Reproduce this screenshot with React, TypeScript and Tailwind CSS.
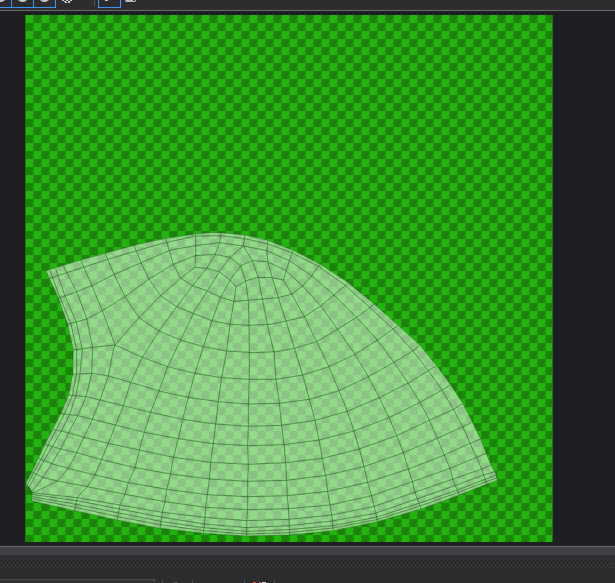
import React from "react";

/* UV shell geometry, stored in thirds of a texture pixel. */
const outline =
  "138,812 190,796 242,780 315,760 402,736 497,715 587,702 626,698 664,698 736,705 803,721 878,750 960,792 1042,846 1122,911 1194,976 1260,1036 1310,1097 1352,1154 1389,1211 1417,1266 1442,1317 1462,1368 1473,1395 1484,1415 1489,1425 1492,1441 1460,1453 1378,1485 1263,1527 1133,1565 1000,1592 869,1605 740,1608 610,1600 480,1585 351,1560 224,1532 96,1503 96,1478 78,1450 95,1417 115,1375 135,1332 158,1288 183,1240 206,1185 218,1123 220,1050 203,973 175,895";

const strips = [
  // columns that follow the left border
  "150,812 181,895 213,972 230,1050 230,1120 217,1187 194,1240 168,1290 145,1335 122,1380 100,1420 82,1455 96,1480",
  "167,806 195,888 228,965 247,1048 247,1050 240,1122 228,1187 208,1245 183,1295 158,1338 130,1385 108,1425 88,1460 96,1480",
  "190,797 232,880 260,955 278,1045 278,1050 275,1122 258,1190 233,1247 205,1300 182,1347 155,1392 128,1433 96,1475",
  "242,780 275,855 307,932 345,1035 340,1050 325,1128 300,1200 277,1258 252,1312 230,1358 205,1405 172,1443 97,1480",
  "315,760 343,825 375,890 417,953 477,993 542,1020 610,1040 680,1053 760,1058 830,1055 883,1045 950,1025 1012,988 1070,952 1122,913",
  "402,736 423,788 447,837 482,887 530,920 635,962 690,973 748,976 810,973 858,963 913,950 962,918 1002,885 1040,853",
  "497,715 520,793 542,835 578,857 622,873 662,892 702,904 745,901 787,897 835,893 875,882 908,858 935,827 960,793",
  "587,705 587,765 585,802",
  "345,1035 417,953 482,887 542,835 585,802 620,805 658,815 690,840 708,860 737,843 772,832 817,833 850,840 868,782 878,753",
  // radial columns
  "664,698 658,730 645,765 620,805 578,857 530,920 477,993 427,1072 392,1147 370,1217 347,1275 325,1330 305,1378 285,1425 262,1460 232,1493 224,1532",
  "734,705 730,738 690,772 658,815 622,873 585,930 542,1020 503,1100 477,1173 452,1237 433,1297 418,1350 405,1403 385,1448 375,1483 360,1515 351,1560",
  "722,797 692,838 662,892 637,960 610,1040 585,1120 565,1192 548,1258 535,1316 520,1372 512,1422 500,1468 495,1505 487,1537 480,1585",
  "708,860 702,904 690,973 680,1053 665,1133 655,1205 647,1272 640,1331 632,1387 628,1437 622,1484 617,1522 615,1552 610,1600",
  "203,973 260,957 307,932 375,890 447,837 520,793 585,767 643,763 690,772 722,797 737,845 745,900 747,975 748,1058 748,1138 745,1212 745,1279 743,1337 745,1393 743,1444 743,1490 743,1529 740,1562 740,1608",
  "730,738 757,782 775,832 787,897 802,973 822,1058 828,1138 838,1210 845,1276 852,1334 857,1388 860,1441 862,1487 865,1526 867,1558 869,1605",
  "803,722 801,752 803,785 817,833 835,893 858,963 883,1045 908,1125 928,1198 945,1261 957,1320 967,1375 977,1426 983,1474 990,1515 995,1545 1000,1592",
  "850,840 875,882 913,950 950,1025 987,1100 1017,1172 1042,1234 1062,1293 1078,1347 1092,1400 1103,1447 1115,1490 1123,1520 1133,1565",
  "722,797 757,782 803,785 855,810 908,858 962,917 1012,987 1065,1063 1105,1130 1138,1193 1167,1253 1190,1307 1210,1358 1225,1407 1237,1445 1245,1477 1263,1527",
  "175,895 230,875 275,857 343,823 423,788 512,750 587,737 658,728 730,738 801,752 868,782 935,827 1002,885 1070,952 1132,1020 1182,1087 1225,1150 1260,1207 1288,1260 1312,1315 1333,1365 1350,1405 1358,1438 1378,1485",
  "147,836 203,817 250,802 323,778 408,753 480,732 585,708 662,707 735,716 803,732 875,758 957,800 1030,852 1105,918 1182,990 1238,1052 1285,1112 1325,1168 1360,1228 1388,1280 1410,1330 1430,1372 1445,1408 1460,1452",
  // rows, top to bottom
  "222,1050 278,1042 345,1035 427,1072 503,1100 585,1120 665,1133 748,1138 828,1138 908,1125 987,1100 1065,1063 1132,1020 1192,978",
  "218,1123 275,1120 325,1128 392,1147 477,1173 565,1192 655,1205 745,1212 838,1210 928,1198 1017,1172 1105,1130 1182,1087 1238,1053 1258,1038",
  "206,1185 258,1190 300,1200 370,1217 452,1237 548,1258 647,1272 745,1279 845,1276 945,1261 1042,1234 1138,1193 1225,1149 1285,1112 1308,1098",
  "183,1240 233,1247 277,1258 347,1275 433,1297 535,1316 640,1331 743,1337 852,1334 957,1320 1062,1293 1167,1253 1260,1207 1325,1171 1350,1155",
  "158,1288 205,1298 252,1312 325,1330 418,1350 520,1372 632,1387 745,1393 857,1388 967,1375 1078,1347 1190,1307 1288,1261 1360,1228 1387,1212",
  "135,1332 182,1347 230,1358 305,1379 405,1403 512,1422 628,1437 743,1444 860,1441 977,1426 1092,1400 1210,1358 1312,1315 1388,1280 1415,1267",
  "115,1375 158,1392 205,1405 285,1425 385,1448 500,1468 622,1484 743,1490 862,1487 983,1474 1103,1447 1225,1407 1333,1365 1410,1330 1440,1318",
  "97,1417 128,1432 172,1443 262,1460 375,1483 495,1505 617,1522 743,1529 865,1526 990,1515 1115,1487 1237,1445 1350,1405 1430,1372 1462,1358",
  "96,1478 232,1493 360,1515 487,1537 615,1552 740,1562 867,1558 995,1545 1120,1520 1243,1477 1357,1438 1445,1407 1473,1395",
  "96,1483 230,1502 358,1527 483,1551 613,1572 740,1583 867,1577 997,1563 1125,1540 1250,1497 1365,1457 1450,1425 1484,1415",
  "96,1490 228,1513 356,1539 482,1564 612,1583 740,1594 868,1589 998,1577 1128,1552 1257,1510 1372,1470 1455,1438 1489,1425",
  "96,1496 226,1522 354,1550 480,1574 611,1592 740,1602 868,1598 999,1584 1130,1559 1260,1518 1375,1477 1458,1445 1491,1434",
];

function UvMesh() {
  return (
    <svg viewBox="75 45 1584 1581" className="block size-full" role="img" aria-label="UV layout">
      <defs>
        <pattern id="checker" x="78" y="45" width="48" height="48" patternUnits="userSpaceOnUse">
          <rect width="48" height="48" fill="#1b830b" />
          <path d="M0 0h24v24H0zM24 24h24v24H24z" fill="#22b50e" />
          <path d="M21 0h3v48h-3zM45 0h3v48h-3z" fill="#1e970c" />
        </pattern>
      </defs>
      <rect x="75" y="45" width="1584" height="1581" fill="url(#checker)" shapeRendering="crispEdges" />
      <path d="M75 45h3v1581h-3zM1656 45h3v1581h-3z" fill="#1b750d" />
      <polygon points={outline} fill="#fff" fillOpacity="0.5" />
      <g fill="none" stroke="#0c4a08" strokeWidth="3" strokeOpacity="0.5">
        {strips.map((points) => (
          <polyline key={points} points={points} />
        ))}
      </g>
      <polygon points={outline} fill="none" stroke="#1a5a16" strokeWidth="2" strokeOpacity="0.6" />
    </svg>
  );
}

function Toggle({ label, children }: { label: string; children: React.ReactNode }) {
  return (
    <button
      aria-label={label}
      className="-ml-px flex h-[22px] w-[23px] shrink-0 items-end justify-center border border-solid border-[#3399ff] pb-[5px]"
    >
      {children}
    </button>
  );
}

function Toolbar() {
  return (
    <header className="flex h-[11px] items-end overflow-hidden border-b border-[#6a6a6a] bg-[#2d2d2f] pb-[2px]">
      <div className="-ml-[10px] flex shrink-0">
        {["Shaded", "Textured", "Distortion"].map((name) => (
          <Toggle key={name} label={name}>
            <svg width="11" height="8" aria-hidden="true">
              <ellipse cx="5.5" cy="4" rx="5" ry="4" fill="#c5c5c5" />
            </svg>
          </Toggle>
        ))}
      </div>
      <button aria-label="Checker map" className="ml-[6px] flex h-[22px] w-[11px] shrink-0 items-end pb-[5px]">
        <svg width="11" height="6" shapeRendering="crispEdges" aria-hidden="true">
          <path d="M0 3h2v1H0zM4 3h2v1H4zM8 3h2v1H8zM2 4h2v1H2zM6 4h2v1H6zM3 5h2v1H3zM6 5h2v1H6z" fill="#d8d8d8" />
        </svg>
      </button>
      <div className="mb-[2px] ml-[21px] h-5 w-px shrink-0 bg-[#555557]" />
      <div className="ml-1 flex shrink-0">
        <Toggle label="Pixel snap">
          <svg width="9" height="8" shapeRendering="crispEdges" aria-hidden="true">
            <path d="M0 6h3v1H0z" fill="#c5c5c5" />
          </svg>
        </Toggle>
      </div>
      <button aria-label="Bake texture" className="ml-1 flex h-[22px] w-3 shrink-0 items-end pb-[6px]">
        <svg width="12" height="6" aria-hidden="true">
          <path d="M0 4h7l1-2h3v3l-1 1H1z" fill="#b8b8b8" />
          <path d="M8 4h2v1H8z" fill="#333" />
        </svg>
      </button>
    </header>
  );
}

function LowerPanel() {
  return (
    <footer className="bg-[#2d2d2f]">
      <div className="h-[9px] border-t border-[#6a6a6a] bg-[#414146]" />
      <svg className="mt-2 block h-[5px] w-full" shapeRendering="crispEdges" aria-hidden="true">
        <defs>
          <pattern id="grip" width="4" height="4" patternUnits="userSpaceOnUse">
            <path d="M1 0h1v1H1zM3 2h1v1H3z" fill="#505052" />
          </pattern>
        </defs>
        <rect width="100%" height="5" fill="url(#grip)" />
      </svg>
      <div className="mt-[11px] flex h-1 items-end overflow-hidden">
        <div className="h-1 w-[155px] border-t border-r border-[#4b4b4d] bg-[#353233]" />
        <div className="ml-[7px] h-[3px] w-px bg-[#555557]" />
        <div className="ml-[10px] h-px w-[5px] bg-[#5a5a5c]" />
        <div className="ml-[14px] h-[3px] w-px bg-[#555557]" />
        <div className="ml-[51px] h-[3px] w-px bg-[#555557]" />
        <svg className="ml-2 shrink-0" width="14" height="1" shapeRendering="crispEdges" aria-hidden="true">
          <path d="M0 0h3v1H0zM6 0h2v1H6z" fill="#d9574a" />
          <path d="M9 0h4v1H9z" fill="#c9c9c9" />
        </svg>
        <div className="ml-[7px] h-[3px] w-px bg-[#555557]" />
      </div>
    </footer>
  );
}

export default function App() {
  return (
    <div className="overflow-hidden bg-[#1f1e23]">
      <Toolbar />
      <main className="py-1 pl-[25px]">
        <div className="aspect-[528/527] w-full max-w-[528px]">
          <UvMesh />
        </div>
      </main>
      <LowerPanel />
    </div>
  );
}
